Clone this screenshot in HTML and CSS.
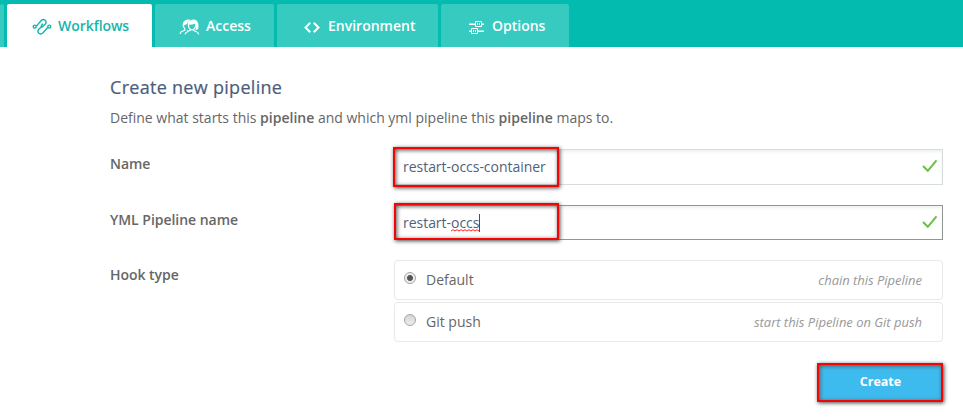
FILE: index.html
```html
<!DOCTYPE html>
<html lang="en">
<head>
<meta charset="utf-8">
<title>Create new pipeline</title>
<link rel="stylesheet" href="styles.css">
</head>
<body>
<nav class="tabs">
  <a class="tab tab-previous"></a>
  <a class="tab tab-workflows active">
    <svg width="20" height="18" viewBox="0 0 20 18" fill="none" stroke="currentColor" stroke-width="1.4"><circle cx="2.7" cy="8.6" r="1.5"/><circle cx="17.3" cy="8.6" r="1.5"/><path d="M4.2 8.4 9.2 2.6Q11.2.6 13.2 2.2 15 4.2 13.1 6.2L10 9.2Q8.5 8.4 10 6.8L11 5.8M10 8.2 6.8 11.2Q5 13.6 6.9 15.3 9 16.9 11 14.8L15.9 9.2"/></svg>
    <span>Workflows</span>
  </a>
  <a class="tab tab-access">
    <svg width="21" height="18" viewBox="0 0 21 18" fill="none" stroke="currentColor" stroke-width="1.2"><path d="M1 16Q1.3 13.8 3.5 13.2L5.8 12.2V10.8Q4.2 9 4.4 6.5M6 16.3Q6.5 14.2 9 13.5L11 12.5V11Q9.2 9.3 9.4 6.5M14.8 11V12.5L17.5 13.7Q19.3 14.3 19.6 16.3M16.7 6.5Q16.9 9.3 14.8 11.2Q12.8 12.5 11 11M8 12.5 9 13.3"/><path fill="currentColor" stroke="none" d="M4 9.5Q2.8 4 6.2 2.2Q8.2.8 11.5 1.8Q8.7 3 8 6L5.2 7.2ZM9.3 9Q7.7 3.5 11.5 2.2Q14.8.8 17.5 2.5Q20.2 4.8 19.3 10.8Q18.5 12.2 16.5 11.8Q17.5 9 15.8 5.8Q13 6.9 10 6.7Z"/></svg>
    <span>Access</span>
  </a>
  <a class="tab tab-environment">
    <svg width="18" height="18" viewBox="0 0 18 18" fill="none" stroke="currentColor" stroke-width="2"><path d="M7.2 4.8 2.5 9.5 7.2 14.2M10.8 4.8 15.5 9.5 10.8 14.2"/></svg>
    <span>Environment</span>
  </a>
  <a class="tab tab-options">
    <svg width="17" height="18" viewBox="0 0 17 18" fill="none" stroke="currentColor"><path stroke-width="1.6" d="M1 6.3H7M14 6.3H16M1 13.3H3M10 13.3H16"/><path d="M7.5 3.5H13.5V8.5H7.5ZM3.5 10.5H9.5V15.5H3.5ZM9.5 5V7M11.5 5V7M5.5 12V14M7.5 12V14"/></svg>
    <span>Options</span>
  </a>
</nav>
<main class="pipeline">
  <h1>Create new pipeline</h1>
  <p class="intro">Define what starts this <b>pipeline</b> and which yml pipeline this <b>pipeline</b> maps to.</p>
  <form class="form">
    <div class="label">Name</div>
    <div class="field">
      <span>restart-occs-container</span>
      <svg class="check" width="16" height="14" viewBox="0 0 16 14"><path d="M1 7 5.8 11.8 14.5 1.3"/></svg>
      <i class="highlight highlight-name"></i>
    </div>
    <div class="label">YML Pipeline name</div>
    <div class="field focused">
      <span>restart-<span class="misspelt">occs<svg class="squiggle" width="28" height="3" viewBox="0 0 28 3"><path d="M0 2 2 .7 4 2 6 .7 8 2 10 .7 12 2 14 .7 16 2 18 .7 20 2 22 .7 24 2 26 .7 28 2"/></svg></span></span><i class="caret"></i>
      <svg class="check" width="16" height="14" viewBox="0 0 16 14"><path d="M1 7 5.8 11.8 14.5 1.3"/></svg>
      <i class="highlight highlight-yml"></i>
    </div>
    <div class="label">Hook type</div>
    <div class="options">
      <div class="option"><i class="radio checked"></i><span>Default</span><em>chain this Pipeline</em></div>
      <div class="option"><i class="radio"></i><span>Git push</span><em>start this Pipeline on Git push</em></div>
    </div>
  </form>
  <div class="create">Create<i class="highlight highlight-create"></i></div>
</main>
</body>
</html>
```
FILE: styles.css
```css
* { box-sizing: border-box; }
body {
  margin: 0;
  height: 420px;
  overflow: hidden;
  background: #fff;
  color: #666;
  font: 14px/20px "Open Sans", "Noto Sans", sans-serif;
}
.tabs {
  display: flex;
  gap: 3px;
  height: 47px;
  padding-top: 4px;
  background: #03bbaf;
}
.tab {
  display: flex;
  align-items: center;
  height: 43px;
  background: #36cac0;
  color: #fff;
  font-size: 14px;
  font-weight: 600;
  border-radius: 2px 2px 0 0;
}
.tab svg { flex: none; margin-top: 2px; }
.tab-previous { width: 4px; }
.tab-workflows { width: 145px; padding-left: 25px; gap: 6px; letter-spacing: -.05px; }
.tab-access { width: 119px; padding-left: 24px; gap: 6px; }
.tab-environment { width: 161px; padding-left: 26px; gap: 7px; }
.tab-options { width: 128px; padding-left: 27px; gap: 7px; }
.tab.active { background: #fff; color: #16b5aa; }
.pipeline { width: 833px; margin-left: 110px; padding-top: 28px; }
h1 {
  margin: 0;
  color: #4b5d7c;
  font-size: 18px;
  font-weight: 500;
  line-height: 25px;
  letter-spacing: .29px;
  -webkit-text-stroke: .2px #4b5d7c;
}
.intro { margin: 8px 0 21px; }
b { font-weight: 600; }
.form {
  display: grid;
  grid-template-columns: 284px 549px;
  grid-template-rows: 36px 35px 82px;
  row-gap: 20px;
}
.label { padding-top: 5px; font-weight: 600; letter-spacing: -.03px; }
.field {
  position: relative;
  display: flex;
  align-items: center;
  padding: 0 4px 0 8px;
  border: 1px solid #d7dddd;
  box-shadow: inset 0 2px 3px #edf1f1;
  color: #52617b;
  letter-spacing: -.03px;
}
.field.focused { border-color: #929695; }
.check { margin-left: auto; margin-top: -3px; fill: none; stroke: #6abf45; stroke-width: 2; }
.focused .check { margin-top: -1px; }
.misspelt { position: relative; }
.squiggle { position: absolute; left: 0; bottom: 0; fill: none; stroke: #f22; stroke-width: 1; }
.caret { width: 1px; height: 18px; background: #405069; }
.highlight {
  position: absolute;
  border: 2px solid #f60404;
  box-shadow: 1px 1px 4px #444, inset 1px 1px 4px #555;
}
.highlight-name { left: -2px; top: -3px; width: 166px; height: 40px; }
.highlight-yml { left: -1px; top: -3px; width: 165px; height: 37px; }
.options { display: flex; flex-direction: column; gap: 2px; }
.option {
  display: flex;
  align-items: center;
  height: 40px;
  padding: 0 20px 0 9px;
  border: 1px solid #e6e9e9;
  border-radius: 4px;
}
.option em { margin-left: auto; color: #999; font-size: 13px; letter-spacing: -.02px; }
.radio {
  width: 12px;
  height: 12px;
  margin: -4px 10px 0 0;
  border: 1px solid #a4a4a4;
  border-radius: 50%;
  background: linear-gradient(#d5d5d5, #eee);
}
.radio.checked { background: radial-gradient(circle, #555 0 2.5px, #eee 3.5px); }
.create {
  position: relative;
  display: flex;
  align-items: center;
  justify-content: center;
  width: 126px;
  height: 39px;
  margin: 21px 0 0 auto;
  padding: 0 0 1px 1px;
  background: #3dbbee;
  color: #fff;
  font-size: 12.5px;
  font-weight: 700;
}
.highlight-create { inset: 0; }
```
